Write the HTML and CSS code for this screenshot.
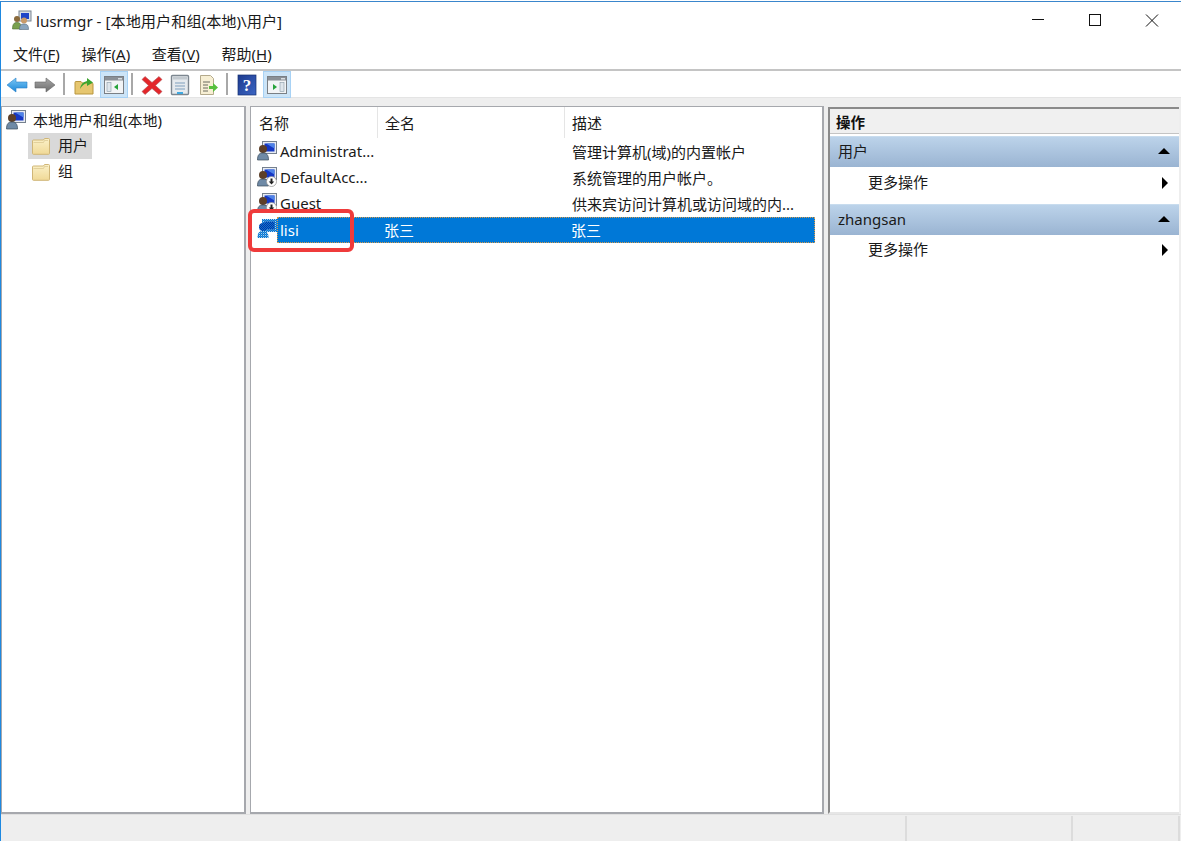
FILE: index.html
```html
<!DOCTYPE html>
<html lang="zh-CN">
<head>
<meta charset="utf-8">
<title>lusrmgr</title>
<link rel="stylesheet" href="styles.css">
</head>
<body>
<svg class="defs" width="0" height="0" aria-hidden="true">
  <defs>
    <linearGradient id="fold" x1="0" y1="0" x2="0" y2="1"><stop offset="0" stop-color="#fbf1c9"/><stop offset="1" stop-color="#f0d996"/></linearGradient>
    <linearGradient id="blueArrow" x1="0" y1="0" x2="0" y2="1"><stop offset="0" stop-color="#7cc8f5"/><stop offset="1" stop-color="#1a86d8"/></linearGradient>
    <linearGradient id="greyArrow" x1="0" y1="0" x2="0" y2="1"><stop offset="0" stop-color="#a8a8a8"/><stop offset="1" stop-color="#6c6c6c"/></linearGradient>
    <linearGradient id="helpBlue" x1="0" y1="0" x2="1" y2="1"><stop offset="0" stop-color="#1c3a8e"/><stop offset="1" stop-color="#3c66c4"/></linearGradient>
    <symbol id="folder" viewBox="0 0 20 18">
      <path d="M1.500 16.500V4q0-1 1-1h10l1-1.500h4q1 0 1 1v14q0 .8-1 .8h-15q-1 0-1-.8z" fill="url(#fold)" stroke="#d0b677"/>
      <path d="M2.500 5.500h10l1-2h3.500" fill="none" stroke="#d8c48c" stroke-width=".7"/>
    </symbol>
    <symbol id="user" viewBox="0 0 20 20">
      <rect x="5.500" y="0.500" width="14" height="12" fill="#e8ecf2" stroke="#75808e"/>
      <rect x="7.500" y="2.500" width="10" height="8" fill="#1537c4"/>
      <path d="M9 2.500h8.500v5z" fill="#4d82e8"/>
      <circle cx="6" cy="8" r="4" fill="#5d3f28"/>
      <path d="M0.500 19c0-5.500 2-7 5.500-7s5.500 1.500 5.500 7z" fill="#6f8aa6" stroke="#3b4a5a" stroke-width=".7"/>
    </symbol>
    <symbol id="users" viewBox="0 0 20 20">
      <rect x="7" y="1" width="12" height="10" fill="#d9dee5" stroke="#7b8591"/>
      <rect x="9" y="3" width="8" height="6" fill="#1e44c8"/>
      <circle cx="5" cy="9" r="3" fill="#8a6a3c"/>
      <path d="M0.500 19c0-5 1.500-6.500 4.500-6.500s4.500 1.500 4.500 6.500z" fill="#79a04e" stroke="#4d6b33" stroke-width=".6"/>
      <circle cx="12" cy="10.500" r="3" fill="#c99a68"/>
      <path d="M7.500 19.500c0-4.500 1.500-5.500 4.500-5.500s4.500 1 4.500 5.500z" fill="#8ba5bd" stroke="#55697c" stroke-width=".6"/>
    </symbol>
    <symbol id="userdown" viewBox="0 0 20 20">
      <use href="#user" width="20" height="20"/>
      <circle cx="14.500" cy="14.500" r="5" fill="#fff" stroke="#8c8c8c" stroke-width=".7"/>
      <path d="M13.500 11.500h2v3h1.800l-2.800 3-2.800-3h1.800z" fill="#222"/>
    </symbol>
    <pattern id="dither" width="2" height="2" patternUnits="userSpaceOnUse">
      <rect width="2" height="2" fill="#0078d7"/><rect width="1" height="1" fill="#b4cfe6"/><rect x="1" y="1" width="1" height="1" fill="#3d8fd6"/>
    </pattern>
    <pattern id="ditherDark" width="2" height="2" patternUnits="userSpaceOnUse">
      <rect width="2" height="2" fill="#0078d7"/><rect width="1" height="1" fill="#10309c"/><rect x="1" y="1" width="1" height="1" fill="#10309c"/>
    </pattern>
    <symbol id="pane" viewBox="0 0 22 22">
      <rect x="1.500" y="2.500" width="19" height="17" fill="#f2f4f6" stroke="#7a7f85"/>
      <rect x="2" y="3" width="18" height="3.500" fill="#8a9097"/>
      <rect x="15" y="4" width="4" height="1.500" fill="#d8dde2"/>
    </symbol>
  </defs>
</svg>

<div class="window">
  <header class="titlebar">
    <svg class="app-icon" width="20" height="20"><use href="#users"/></svg>
    <span class="title">lusrmgr - [本地用户和组(本地)\用户]</span>
    <div class="controls">
      <svg class="ctl" width="46" height="16" viewBox="0 0 46 16"><path d="M17 7.500h12" stroke="#111"/></svg>
      <svg class="ctl" width="46" height="16" viewBox="0 0 46 16"><rect x="17.500" y="2.500" width="11" height="11" fill="none" stroke="#111"/></svg>
      <svg class="ctl" width="46" height="16" viewBox="0 0 46 16"><path d="M17 2.500l12 12M29 2.500l-12 12" stroke="#111"/></svg>
    </div>
  </header>

  <nav class="menubar">
    <span class="menu">文件(<u>F</u>)</span>
    <span class="menu">操作(<u>A</u>)</span>
    <span class="menu">查看(<u>V</u>)</span>
    <span class="menu">帮助(<u>H</u>)</span>
  </nav>

  <div class="toolbar">
    <span class="tool"><svg width="22" height="20" viewBox="0 0 22 20"><path d="M1 10l9-7v4h11v6H10v4z" fill="url(#blueArrow)" stroke="#2a80c8" stroke-width=".6"/></svg></span>
    <span class="tool"><svg width="22" height="20" viewBox="0 0 22 20"><path d="M21 10l-9-7v4H1v6h11v4z" fill="url(#greyArrow)" stroke="#666" stroke-width=".6"/></svg></span>
    <span class="sep"></span>
    <span class="tool"><svg width="22" height="22" viewBox="0 0 22 22"><path d="M2 20V8.500q0-1 1-1h5l1.500 1.500h9.500q1 0 1 1V20z" fill="#e6c66f" stroke="#b9963f"/><path d="M7 15q1-7 7-8V4l6 4.500-6 3.500V9q-4 1-7 6z" fill="#3da52f"/></svg></span>
    <span class="tool on"><svg width="22" height="22"><use href="#pane"/><rect x="4" y="8.500" width="4" height="9" fill="#dfe6ec" stroke="#8a9ba8" stroke-width=".6"/><path d="M15 10v6l-4-3z" fill="#27a33b"/></svg></span>
    <span class="sep"></span>
    <span class="tool"><svg width="22" height="22" viewBox="0 0 22 22"><path d="M4 2.500l7 6 7-6 3 3-6.500 6 6.500 6-3 3-7-6-7 6-3-3 6.500-6L1 5.500z" fill="#e3262a" stroke="#b0585a" stroke-width=".6"/></svg></span>
    <span class="tool"><svg width="22" height="22" viewBox="0 0 22 22"><rect x="2.500" y="1.500" width="17" height="19" rx="1" fill="#e6eaee" stroke="#7d8790" stroke-width="1.400"/><rect x="4" y="3" width="14" height="2.500" fill="#c2c9cf"/><path d="M6 9h10M6 12h10M6 15h10" stroke="#7f9fbd"/><rect x="8" y="18" width="6" height="2" fill="#3fa8e0"/></svg></span>
    <span class="tool"><svg width="22" height="22" viewBox="0 0 22 22"><path d="M3.500 1.500h10l3 3v16h-13z" fill="#f7efd4" stroke="#b4aa8c"/><path d="M6 8h7M6 11h5M6 14h5M6 17h5" stroke="#6a6a5e"/><path d="M12 12h4V9l5 4.500-5 4.500v-3h-4z" fill="#58c03e"/></svg></span>
    <span class="sep"></span>
    <span class="tool"><svg width="22" height="22" viewBox="0 0 22 22"><rect x="2" y="1" width="18" height="20" fill="url(#helpBlue)" stroke="#16306f" stroke-width=".7"/><text x="11" y="17" class="qmark">?</text></svg></span>
    <span class="tool on"><svg width="22" height="22"><use href="#pane"/><rect x="14" y="8.500" width="4" height="9" fill="#dfe6ec" stroke="#8a9ba8" stroke-width=".6"/><path d="M7 10v6l4-3z" fill="#27a33b"/></svg></span>
  </div>

  <main class="panes">
    <section class="pane tree">
      <div class="tree-root">
        <svg class="ico" width="20" height="20"><use href="#user"/></svg>
        <span>本地用户和组(本地)</span>
      </div>
      <div class="tree-item current">
        <svg class="ico" width="20" height="18"><use href="#folder"/></svg>
        <span>用户</span>
      </div>
      <div class="tree-item">
        <svg class="ico" width="20" height="18"><use href="#folder"/></svg>
        <span>组</span>
      </div>
    </section>

    <section class="pane list">
      <div class="list-head">
        <span class="col col-name">名称</span>
        <span class="col col-full">全名</span>
        <span class="col col-desc">描述</span>
      </div>
      <div class="row">
        <span class="cell col-name"><svg class="ico" width="20" height="20"><use href="#user"/></svg><span>Administrat...</span></span>
        <span class="cell col-full"></span>
        <span class="cell col-desc">管理计算机(域)的内置帐户</span>
      </div>
      <div class="row">
        <span class="cell col-name"><svg class="ico" width="20" height="20"><use href="#userdown"/></svg><span>DefaultAcc...</span></span>
        <span class="cell col-full"></span>
        <span class="cell col-desc">系统管理的用户帐户。</span>
      </div>
      <div class="row">
        <span class="cell col-name"><svg class="ico" width="20" height="20"><use href="#userdown"/></svg><span>Guest</span></span>
        <span class="cell col-full"></span>
        <span class="cell col-desc">供来宾访问计算机或访问域的内...</span>
      </div>
      <div class="row selected">
        <svg class="ico sel-ico" width="20" height="20" viewBox="0 0 20 20">
          <rect x="5" y="0" width="15" height="13" fill="url(#dither)"/>
          <rect x="7.500" y="2.500" width="10" height="8" fill="url(#ditherDark)"/>
          <circle cx="6" cy="8" r="4" fill="url(#ditherDark)"/>
          <path d="M0.500 19c0-5.500 2-7 5.500-7s5.500 1.500 5.500 7z" fill="url(#dither)"/>
        </svg>
        <div class="sel-bar">
          <span class="cell sel-name">lisi</span>
          <span class="cell sel-full">张三</span>
          <span class="cell sel-desc">张三</span>
        </div>
      </div>
      <div class="callout"></div>
    </section>

    <aside class="pane actions">
      <div class="act-title">操作</div>
      <div class="act-group">用户<span class="up"></span></div>
      <div class="act-item">更多操作<span class="more"></span></div>
      <div class="act-group">zhangsan<span class="up"></span></div>
      <div class="act-item last">更多操作<span class="more"></span></div>
    </aside>
  </main>

  <footer class="statusbar">
    <span class="st st-a"></span>
    <span class="st st-b"></span>
    <span class="st st-c"></span>
  </footer>
</div>
</body>
</html>
```
FILE: styles.css
```css
* { box-sizing: border-box; }
html, body { margin: 0; height: 100%; overflow: hidden; background: #fff; }
body { padding-top: 1px; font-family: "Noto Sans", "Noto Sans CJK SC", sans-serif; font-size: 15px; color: #1a1a1a; }
.defs { position: absolute; }
.window { height: 840px; border-top: 1px solid #3a86cc; border-left: 1px solid #1e88e0; display: flex; flex-direction: column; }
.titlebar { height: 38px; display: flex; align-items: center; padding-left: 11px; flex: none; }
.app-icon { margin-right: 4px; margin-top: -2px; }
.title { margin-top: -3px; font-size: 15.200px; }
.controls { margin-left: auto; display: flex; gap: 11px; margin-top: -2px; padding-right: 6px; }
.menubar { height: 31px; flex: none; display: flex; gap: 21.700px; align-items: center; padding: 0 0 3px 12px; border-bottom: 2px solid #c4c4c4; }
.toolbar { height: 26px; flex: none; display: flex; align-items: flex-start; padding-left: 2px; background: #fff; position: relative; z-index: 1; }
.tool { width: 28px; height: 27px; display: flex; align-items: center; justify-content: center; }
.tool.on { background: #cce4f7; border: 1px solid #a8d2f5; margin: 0 -1px 0 2px; }
.sep { width: 2px; height: 22px; background: #a8a8a8; margin: 2px 5px 0 4px; }
.qmark { font: bold 17px "Liberation Serif", serif; fill: #fff; text-anchor: middle; }
.panes { flex: 1; min-height: 0; display: flex; background: #eee; padding: 8px 2px 0 0; border-top: 1px solid #e4e4e4; }
.pane { background: #fff; position: relative; }
.tree { width: 245px; flex: none; border: solid #a6a8ad; border-width: 1px 2px 2px 1px; padding-left: 4px; margin-right: 4px; }
.tree-root { height: 26px; display: flex; align-items: center; gap: 7px; }
.tree-root span { margin-bottom: 2px; }
.tree-item { height: 26px; width: 64px; margin-left: 22px; padding: 0 0 1px 3px; display: flex; align-items: center; gap: 7px; }
.tree-item span { margin-bottom: 2px; }
.tree-item.current { background: #d9d9d9; }
.list { width: 574px; flex: none; border: solid #a6a8ad; border-width: 1px 2px 2px 1px; margin-right: 4px; }
.list-head { height: 31px; display: flex; align-items: flex-start; }
.col { height: 100%; display: flex; align-items: center; padding-left: 7px; }
.col-name { width: 126px; flex: none; }
.col + .col { border-left: 1px solid #e5e5e5; }
.list-head .col-name { padding-left: 8px; }
.col-full { width: 187px; flex: none; }
.col-desc { width: 250px; flex: none; }
.row { height: 26px; display: flex; align-items: center; }
.cell { display: flex; align-items: center; height: 100%; padding-left: 8px; white-space: nowrap; }
.cell.col-name { padding-left: 6px; gap: 3px; }
.selected { width: 564px; padding-left: 6px; }
.sel-ico { flex: none; }
.sel-bar { margin-top: 1px; flex: 1; height: 26px; display: flex; align-items: center; background: #0078d7; color: #fff; border: 1px dotted #d79a4a; }
.sel-name { width: 100px; padding-left: 2px; }
.sel-full { width: 187px; padding-left: 6px; }
.sel-desc { padding-left: 6px; }
.callout { position: absolute; left: -3px; top: 102px; width: 106px; height: 43px; border: 4px solid #ef3b3b; border-radius: 6px; }
.actions { flex: 1; margin-top: 1px; border-top: 2px solid #8a8a8a; border-left: 2px solid #8a8a8a; border-bottom: 2px solid #e6e6e6; }
.act-title { height: 25px; background: #f0f0f0; border-bottom: 1px solid #c4c4c4; display: flex; align-items: center; padding-left: 6px; font-size: 14.500px; font-weight: 700; color: #111; }
.act-group { height: 31px; margin-top: 2px; background: linear-gradient(#bcd3ea, #9ab4d2); display: flex; align-items: center; padding: 0 0 2px 8px; position: relative; border-top: 1px solid #c8dcee; }
.act-title + .act-group { padding-bottom: 4px; }
.act-item + .act-group { margin-top: 0; }
.up { position: absolute; right: 9px; top: 11px; border: 6px solid transparent; border-top: 0; border-bottom: 6px solid #000; }
.act-item { height: 37px; display: flex; align-items: center; padding: 0 0 9px 38px; position: relative; }
.act-item.last { height: 26px; padding-bottom: 0; }
.more { position: absolute; right: 11px; top: 10px; border: 6px solid transparent; border-right: 0; border-left: 6px solid #000; }
.act-item.last .more { top: 9px; }
.statusbar { height: 27px; flex: none; display: flex; justify-content: flex-end; background: #eee; padding-top: 1px; border-top: 1px solid #e0e0e0; }
.st { border-left: 2px solid #dcdcdc; }
.st-a { width: 166px; }
.st-b { width: 107px; }
.st-c { width: 3px; }
```
